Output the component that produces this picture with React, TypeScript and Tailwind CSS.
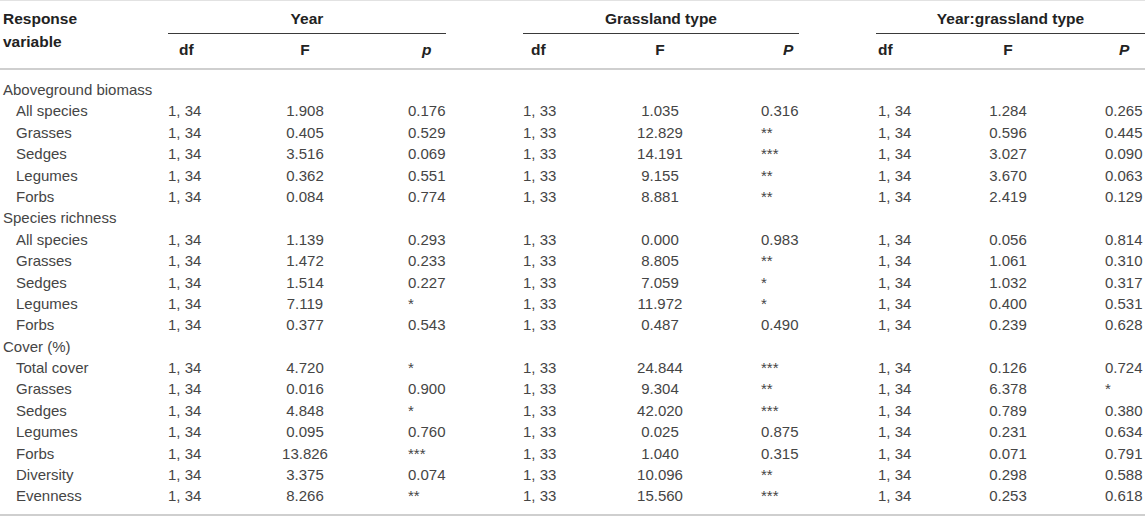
import React from "react";

type Row = { label: string; section?: boolean; v?: string[] };

const rows: Row[] = [
  { label: "Aboveground biomass", section: true },
  { label: "All species", v: ["1, 34", "1.908", "0.176", "1, 33", "1.035", "0.316", "1, 34", "1.284", "0.265"] },
  { label: "Grasses", v: ["1, 34", "0.405", "0.529", "1, 33", "12.829", "**", "1, 34", "0.596", "0.445"] },
  { label: "Sedges", v: ["1, 34", "3.516", "0.069", "1, 33", "14.191", "***", "1, 34", "3.027", "0.090"] },
  { label: "Legumes", v: ["1, 34", "0.362", "0.551", "1, 33", "9.155", "**", "1, 34", "3.670", "0.063"] },
  { label: "Forbs", v: ["1, 34", "0.084", "0.774", "1, 33", "8.881", "**", "1, 34", "2.419", "0.129"] },
  { label: "Species richness", section: true },
  { label: "All species", v: ["1, 34", "1.139", "0.293", "1, 33", "0.000", "0.983", "1, 34", "0.056", "0.814"] },
  { label: "Grasses", v: ["1, 34", "1.472", "0.233", "1, 33", "8.805", "**", "1, 34", "1.061", "0.310"] },
  { label: "Sedges", v: ["1, 34", "1.514", "0.227", "1, 33", "7.059", "*", "1, 34", "1.032", "0.317"] },
  { label: "Legumes", v: ["1, 34", "7.119", "*", "1, 33", "11.972", "*", "1, 34", "0.400", "0.531"] },
  { label: "Forbs", v: ["1, 34", "0.377", "0.543", "1, 33", "0.487", "0.490", "1, 34", "0.239", "0.628"] },
  { label: "Cover (%)", section: true },
  { label: "Total cover", v: ["1, 34", "4.720", "*", "1, 33", "24.844", "***", "1, 34", "0.126", "0.724"] },
  { label: "Grasses", v: ["1, 34", "0.016", "0.900", "1, 33", "9.304", "**", "1, 34", "6.378", "*"] },
  { label: "Sedges", v: ["1, 34", "4.848", "*", "1, 33", "42.020", "***", "1, 34", "0.789", "0.380"] },
  { label: "Legumes", v: ["1, 34", "0.095", "0.760", "1, 33", "0.025", "0.875", "1, 34", "0.231", "0.634"] },
  { label: "Forbs", v: ["1, 34", "13.826", "***", "1, 33", "1.040", "0.315", "1, 34", "0.071", "0.791"] },
  { label: "Diversity", v: ["1, 34", "3.375", "0.074", "1, 33", "10.096", "**", "1, 34", "0.298", "0.588"] },
  { label: "Evenness", v: ["1, 34", "8.266", "**", "1, 33", "15.560", "***", "1, 34", "0.253", "0.618"] },
];

const GRID =
  "grid grid-cols-[168px_92px_90px_96px_77px_92px_90px_94px_77px_88px_88px_93px]";

function BodyRow({ r }: { r: Row }) {
  if (r.section) {
    return (
      <div className={`${GRID} h-[21.4px] leading-[21.4px]`}>
        <div className="col-span-12 pl-[3px] whitespace-nowrap">{r.label}</div>
      </div>
    );
  }
  const v = r.v!;
  return (
    <div className={`${GRID} h-[21.4px] leading-[21.4px] whitespace-nowrap`}>
      <div className="pl-[16px]">{r.label}</div>
      <div>{v[0]}</div>
      <div className="text-center">{v[1]}</div>
      <div className="pl-[58px]">{v[2]}</div>
      <div />
      <div>{v[3]}</div>
      <div className="text-center">{v[4]}</div>
      <div className="pl-[56px]">{v[5]}</div>
      <div />
      <div className="pl-[2px]">{v[6]}</div>
      <div className="text-center">{v[7]}</div>
      <div className="pl-[53px]">{v[8]}</div>
    </div>
  );
}

export default function App() {
  return (
    <div
      className="w-[1145px] h-[516px] bg-white text-[15px] text-[#454545] overflow-hidden"
      style={{ fontFamily: '"Liberation Sans", Arial, Helvetica, sans-serif' }}
    >
      {/* header */}
      <div className={`${GRID} text-[15.5px] border-t border-[#e2e2e2] border-b-2 border-b-[#cfcfcf] font-bold text-[#222]`}>
        <div className="col-start-1 row-start-1 row-end-3 pl-[3px] pt-[6px] leading-[23px]">
          Response
          <br />
          variable
        </div>
        <div className="col-start-2 col-span-3 row-start-1 text-center pt-[8px] pb-[4px] leading-[20px] border-b border-[#3a3a3a]">
          Year
        </div>
        <div className="col-start-6 col-span-3 row-start-1 text-center pt-[8px] pb-[4px] leading-[20px] border-b border-[#3a3a3a]">
          Grassland type
        </div>
        <div className="col-start-10 col-span-3 row-start-1 text-center pt-[8px] pb-[4px] leading-[20px] border-b border-[#3a3a3a]">
          Year:grassland type
        </div>

        <div className="col-start-2 row-start-2 pl-[11px] pt-[6px] pb-[8px] leading-[20px]">df</div>
        <div className="col-start-3 row-start-2 text-center pt-[6px] pb-[8px] leading-[20px]">F</div>
        <div className="col-start-4 row-start-2 pl-[72px] pt-[6px] pb-[8px] leading-[20px] italic">p</div>

        <div className="col-start-6 row-start-2 pl-[8px] pt-[6px] pb-[8px] leading-[20px]">df</div>
        <div className="col-start-7 row-start-2 text-center pt-[6px] pb-[8px] leading-[20px]">F</div>
        <div className="col-start-8 row-start-2 pl-[78px] pt-[6px] pb-[8px] leading-[20px] italic">P</div>

        <div className="col-start-10 row-start-2 pl-[2px] pt-[6px] pb-[8px] leading-[20px]">df</div>
        <div className="col-start-11 row-start-2 text-center pt-[6px] pb-[8px] leading-[20px]">F</div>
        <div className="col-start-12 row-start-2 pl-[67px] pt-[6px] pb-[8px] leading-[20px] italic">P</div>
      </div>

      {/* body */}
      <div className="pt-[9px] pb-[7px] border-b-2 border-[#cfcfcf]">
        {rows.map((r, i) => (
          <BodyRow key={i} r={r} />
        ))}
      </div>
    </div>
  );
}
